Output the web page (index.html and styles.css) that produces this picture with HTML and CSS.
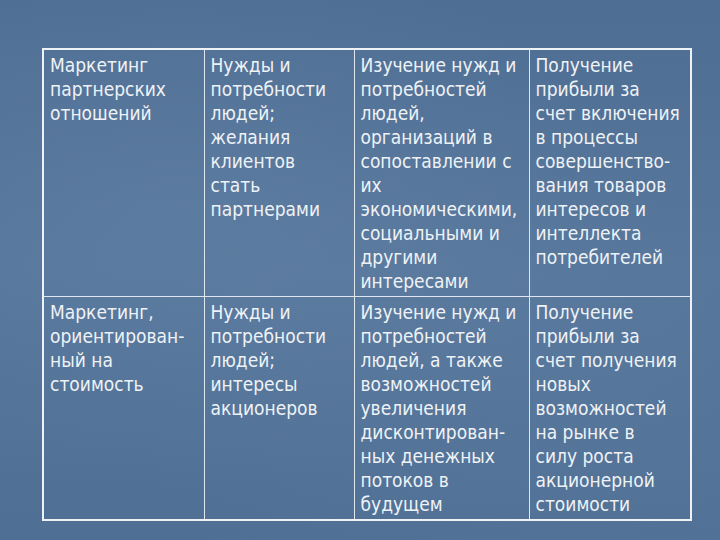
FILE: index.html
```html
<!DOCTYPE html>
<html>
<head>
<meta charset="utf-8">
<link rel="stylesheet" href="styles.css">
</head>
<body>
<div class="slide">
<table class="grid">
<colgroup><col class="c1"><col class="c2"><col class="c3"><col class="c4"></colgroup>
<tr class="r1">
<td>Маркетинг<br>партнерских<br>отношений</td>
<td>Нужды и<br>потребности<br>людей;<br>желания<br>клиентов<br>стать<br>партнерами</td>
<td>Изучение нужд и<br>потребностей<br>людей,<br>организаций в<br>сопоставлении с<br>их<br>экономическими,<br>социальными и<br>другими<br>интересами</td>
<td>Получение<br>прибыли за<br>счет включения<br>в процессы<br>совершенство-<br>вания товаров<br>интересов и<br>интеллекта<br>потребителей</td>
</tr>
<tr class="r2">
<td>Маркетинг,<br>ориентирован-<br>ный на<br>стоимость</td>
<td>Нужды и<br>потребности<br>людей;<br>интересы<br>акционеров</td>
<td>Изучение нужд и<br>потребностей<br>людей, а также<br>возможностей<br>увеличения<br>дисконтирован-<br>ных денежных<br>потоков в<br>будущем</td>
<td>Получение<br>прибыли за<br>счет получения<br>новых<br>возможностей<br>на рынке в<br>силу роста<br>акционерной<br>стоимости</td>
</tr>
</table>
</div>
</body>
</html>
```
FILE: styles.css
```css
html, body {
  margin: 0;
  padding: 0;
}
body {
  width: 720px;
  height: 540px;
  overflow: hidden;
  background-color: #54739a;
  background-image:
    radial-gradient(ellipse at 25% 40%, rgba(115,145,180,0.25), rgba(0,0,0,0) 60%),
    radial-gradient(ellipse at 80% 70%, rgba(105,135,170,0.2), rgba(0,0,0,0) 55%),
    linear-gradient(180deg, #4f6e94 0%, #55759a 50%, #4f6f94 100%);
}
.slide {
  padding: 48px 0 0 42px;
}
.grid {
  border-collapse: collapse;
  border: 2px solid #eef2f6;
  table-layout: fixed;
  width: 650px;
  font-family: "DejaVu Sans Condensed", "DejaVu Sans", sans-serif;
  font-size: 19px;
  line-height: 24px;
  color: #eef2f6;
}
.c1 { width: 161px; }
.c2 { width: 150px; }
.c3 { width: 175px; }
.c4 { width: 162px; }
.grid td {
  border: 1px solid #dfe6ee;
  vertical-align: top;
  padding: 3px 0 0 6px;
  white-space: nowrap;
  overflow: hidden;
}
.r1 td { height: 243px; }
.r2 td { height: 219px; }
```
